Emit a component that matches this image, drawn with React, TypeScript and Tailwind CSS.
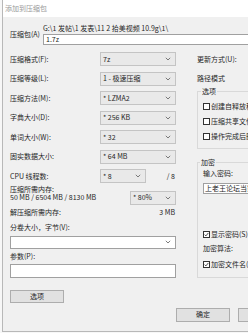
import React from 'react';

function Chevron() {
  return (
    <svg width="6" height="4" viewBox="0 0 6 4" className="shrink-0">
      <path d="M0.8 0.8 L3 3 L5.2 0.8" fill="none" stroke="#5c5c5c" strokeWidth="0.8" />
    </svg>
  );
}

function Combo({ value, className }: { value: string; className: string }) {
  return (
    <div className={`flex items-center justify-between h-[14px] border border-[#c4c4c4] bg-[#e9e9e9] pl-[2px] pr-[4px] whitespace-nowrap ${className}`}>
      <span>{value}</span>
      <Chevron />
    </div>
  );
}

function Row({ label, children }: { label: string; children?: React.ReactNode }) {
  return (
    <div className="flex items-center justify-between h-[19.5px] whitespace-nowrap">
      <span>{label}</span>
      {children}
    </div>
  );
}

function Check({ label, checked, className = '' }: { label: string; checked?: boolean; className?: string }) {
  return (
    <div className={`flex items-center gap-[1px] whitespace-nowrap ${className}`}>
      <span className="w-[7px] h-[7px] shrink-0 border border-[#333333] bg-white flex items-center justify-center">
        {checked && (
          <svg width="5" height="5" viewBox="0 0 5 5">
            <path d="M0.6 2.6 L1.9 3.9 L4.4 0.9" fill="none" stroke="#222222" strokeWidth="0.8" />
          </svg>
        )}
      </span>
      <span>{label}</span>
    </div>
  );
}

export default function App() {
  return (
    <div className="w-[248px] h-[333px] overflow-hidden bg-[#f7f7f7] text-[7px] leading-none text-[#262626] font-['Noto_Sans_CJK_SC','Noto_Sans',sans-serif]">
      <div className="ml-[2px] w-[420px] h-[332px] border-l border-b border-[#b8b8b8] bg-[#f0f0f0] flex flex-col">
        {/* title bar */}
        <div className="h-[17px] shrink-0 bg-white flex items-center pl-[2px] text-[#9a9a9a]">添加到压缩包</div>

        <div className="pl-[7px] flex flex-col">
          {/* archive */}
          <div className="flex pt-[7px]">
            <span className="w-[33px] shrink-0 mt-[6.5px] whitespace-nowrap">压缩包(A)</span>
            <div className="flex flex-col flex-1">
              <span className="h-[8px] flex items-center whitespace-nowrap">{"G:\\1 发帖\\1 发表\\11 2 拾美视频 10.9g\\1\\"}</span>
              <div className="mt-[2px] h-[11px] bg-white border border-[#a0a0a0] flex items-center pl-[2px]">1.7z</div>
            </div>
          </div>

          <div className="flex gap-[21px] mt-[4.25px]">
            {/* left column */}
            <div className="w-[166px] shrink-0 flex flex-col">
              <Row label="压缩格式(F):"><Combo value="7z" className="w-[76px]" /></Row>
              <Row label="压缩等级(L):"><Combo value="1 - 极速压缩" className="w-[76px]" /></Row>
              <Row label="压缩方法(M):"><Combo value="* LZMA2" className="w-[76px]" /></Row>
              <Row label="字典大小(D):"><Combo value="* 256 KB" className="w-[76px]" /></Row>
              <Row label="单词大小(W):"><Combo value="* 32" className="w-[76px]" /></Row>
              <Row label="固实数据大小:"><Combo value="* 64 MB" className="w-[76px]" /></Row>
              <div className="flex items-center h-[19.5px] whitespace-nowrap">
                <span className="w-[90px]">CPU 线程数:</span>
                <Combo value="* 8" className="w-[46px]" />
                <span className="ml-auto pr-[1px]">/ 8</span>
              </div>

              <div className="flex justify-between items-start">
                <div className="flex flex-col gap-[1.5px] whitespace-nowrap">
                  <span>压缩所需内存:</span>
                  <span>50 MB / 6504 MB / 8130 MB</span>
                </div>
                <Combo value="* 80%" className="w-[46px] mt-[5px]" />
              </div>

              <div className="flex justify-between h-[7px] mt-[4.5px] whitespace-nowrap">
                <span>解压缩所需内存:</span>
                <span className="pr-[1px]">3 MB</span>
              </div>

              <span className="h-[7px] mt-[8px] whitespace-nowrap">分卷大小，字节(V):</span>
              <div className="mt-[4.5px] h-[13px] bg-white border border-[#a0a0a0] flex items-center justify-end pr-[4px]">
                <Chevron />
              </div>

              <span className="h-[7px] mt-[4.5px] whitespace-nowrap">参数(P):</span>
              <div className="mt-[3.5px] h-[14px] bg-white border border-[#a0a0a0]"></div>

              <button className="mt-[12px] w-[54px] h-[13px] bg-[#e1e1e1] border border-[#adadad] flex items-center justify-center">选项</button>
            </div>

            {/* right column */}
            <div className="w-[230px] shrink-0 flex flex-col">
              <Row label="更新方式(U):" />
              <Row label="路径模式" />

              <fieldset className="border border-[#d9d9d9] p-0 m-0">
                <legend className="ml-[3px] px-[1px] h-[7px]">选项</legend>
                <div className="pl-[5px] pt-[4px] pb-[3.5px] flex flex-col">
                  <Check label="创建自释放程序(X)" className="h-[15px]" />
                  <Check label="压缩共享文件(R)" className="h-[15px]" />
                  <Check label="操作完成后删除源文件" className="h-[15px]" />
                </div>
              </fieldset>

              <fieldset className="border border-[#d9d9d9] p-0 m-0 mt-[10.5px]">
                <legend className="ml-[2px] px-[1px] h-[7px]">加密</legend>
                <div className="pl-[5px] pt-[4px] pb-[5px] flex flex-col">
                  <span className="h-[7px] whitespace-nowrap">输入密码:</span>
                  <div className="mt-[5.5px] h-[11px] bg-white border border-[#a0a0a0] flex items-center pl-[1px] whitespace-nowrap">上老王论坛当家</div>
                  <Check label="显示密码(S)" checked className="h-[14px] mt-[34px]" />
                  <div className="h-[14px] flex items-center whitespace-nowrap">加密算法:</div>
                  <Check label="加密文件名(N)" checked className="h-[14px] mt-[2px]" />
                </div>
              </fieldset>
            </div>
          </div>

          {/* dialog buttons */}
          <div className="flex gap-[8px] mt-[5px] pl-[166px]">
            <button className="w-[54px] h-[14px] bg-[#e1e1e1] border border-[#adadad] flex items-center justify-center">确定</button>
            <button className="w-[54px] h-[14px] bg-[#e1e1e1] border border-[#adadad] flex items-center justify-center">取消</button>
          </div>
        </div>
      </div>
    </div>
  );
}
